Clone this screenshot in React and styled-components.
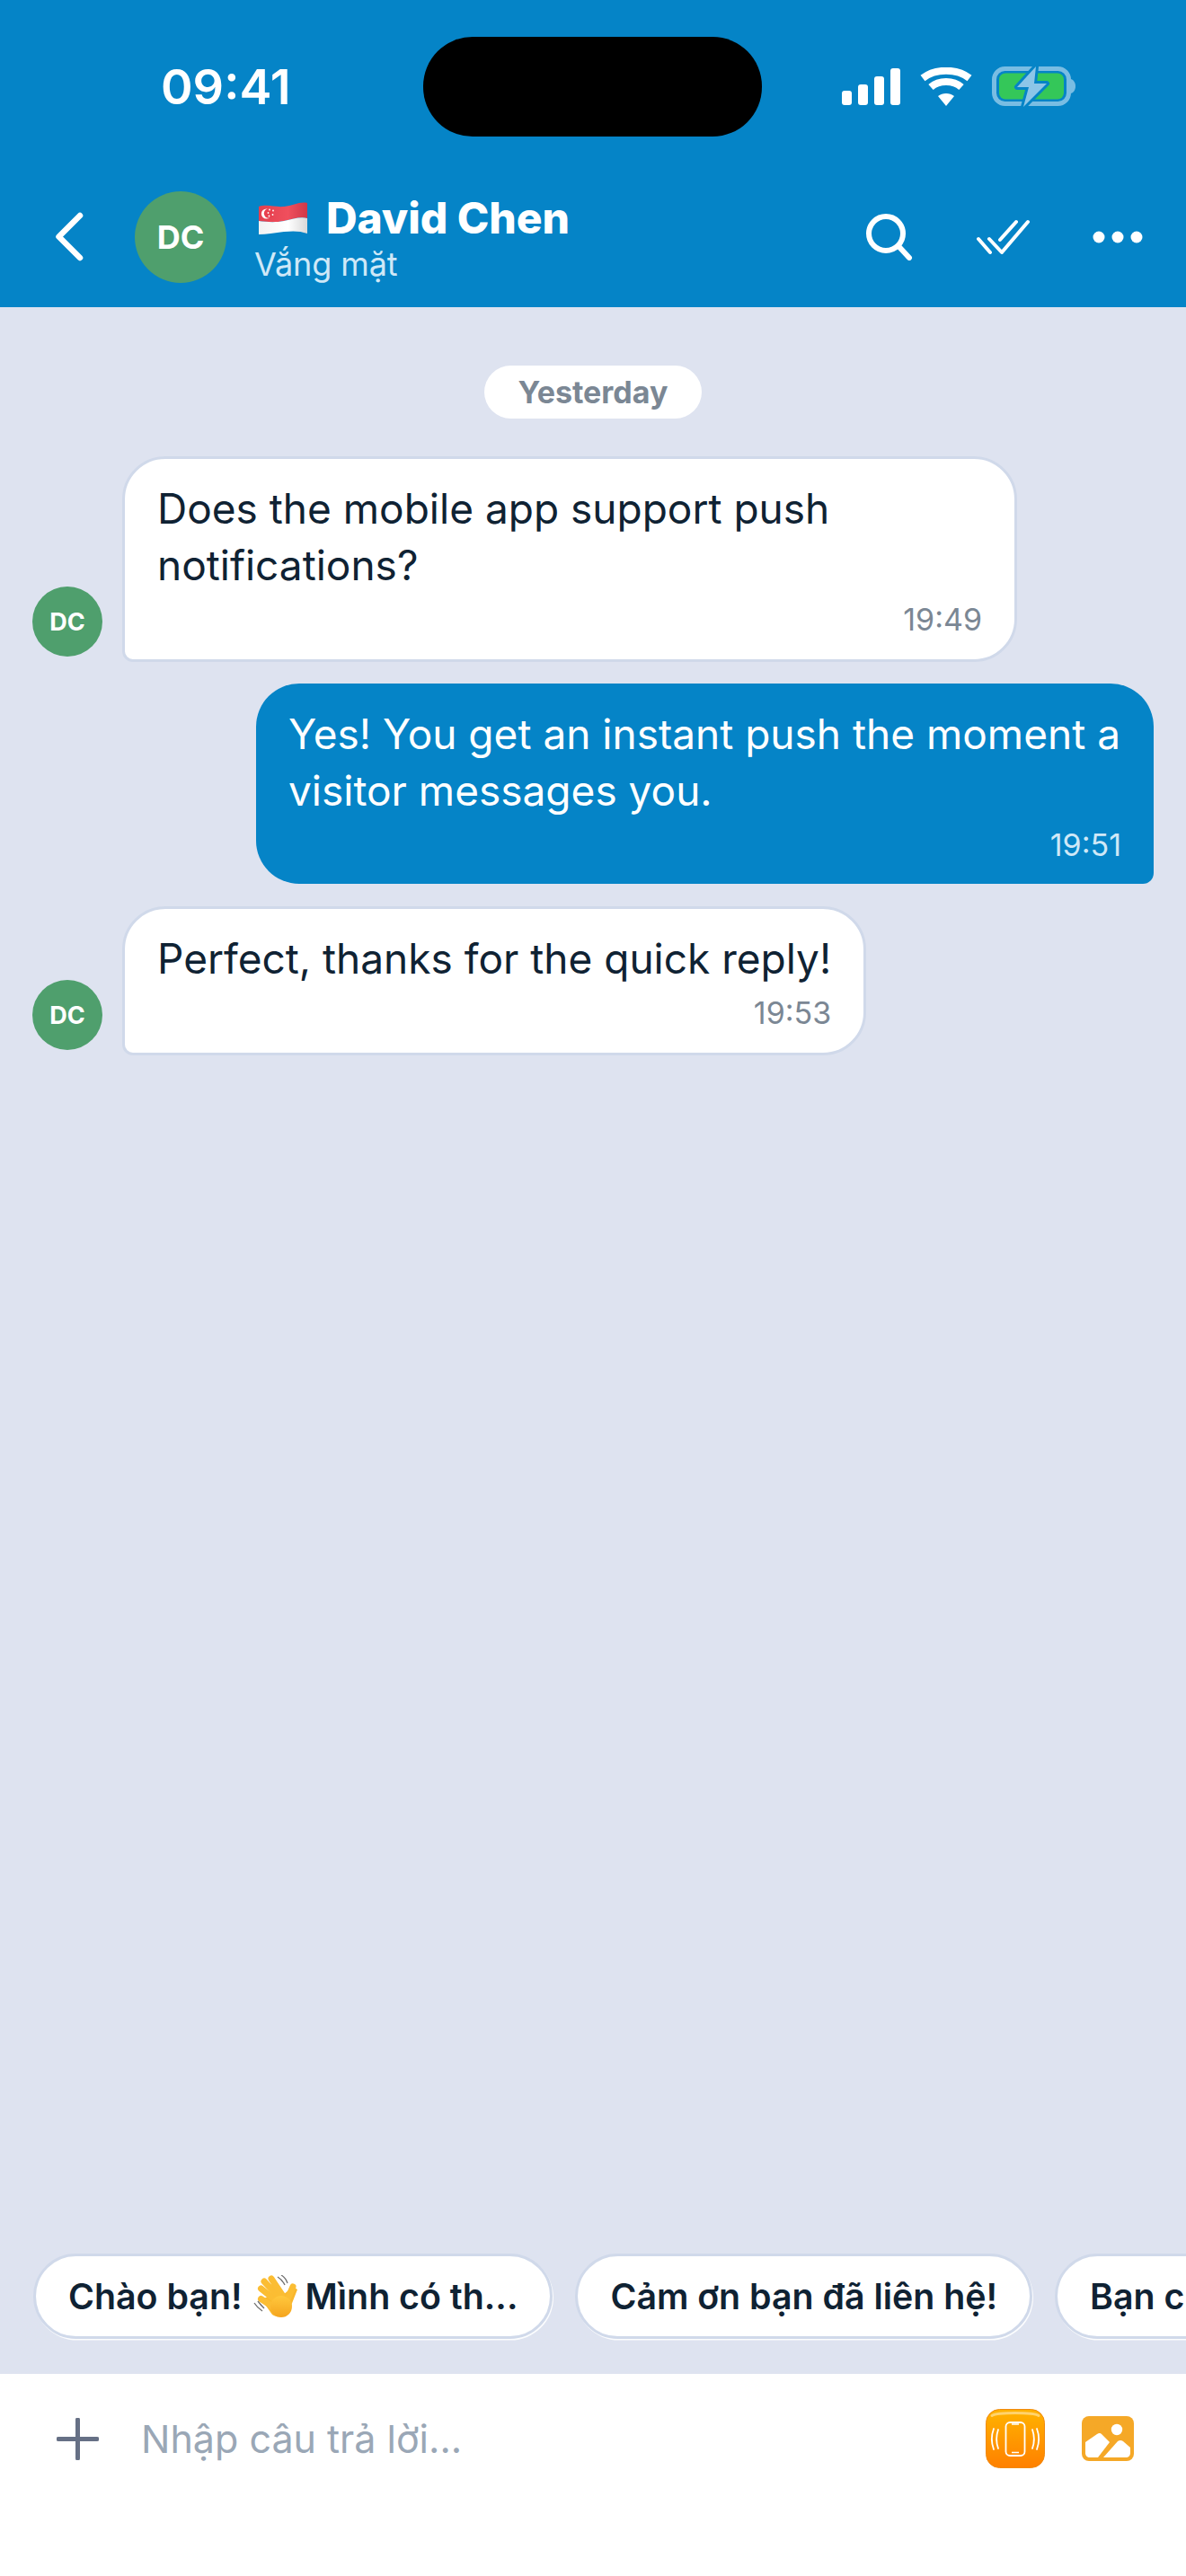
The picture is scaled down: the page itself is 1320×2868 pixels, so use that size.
import React from "react";
import styled, { createGlobalStyle } from "styled-components";

const Global = createGlobalStyle`
  html, body { margin: 0; padding: 0; background: #fff; }
  * { box-sizing: border-box; }
  body { font-family: Inter, "Noto Sans", sans-serif; -webkit-font-smoothing: antialiased; }
`;

const Screen = styled.div`
  width: 1320px; height: 2868px; display: flex; flex-direction: column;
  background: #dee3f0; overflow: hidden;
`;
const Header = styled.header`
  background: #0584c7; height: 342px; flex: none; color: #fff; padding-top: 41px;
`;
const StatusBar = styled.div`
  display: flex; align-items: center; height: 111px; padding-left: 179px;
`;
const Time = styled.div`
  font-size: 54px; font-weight: 600; width: 292px; line-height: 1; letter-spacing: 0;
`;
const Island = styled.div`
  width: 377px; height: 111px; border-radius: 55px; background: #000; flex: none;
`;
const StatusIcons = styled.div`
  display: flex; align-items: center; margin-left: 89px; gap: 22px;
`;
const Nav = styled.div`
  display: flex; align-items: center; margin-top: 61px; height: 102px; padding-left: 58px;
`;
const BackIcon = styled.svg`
  width: 38px; height: 60px; flex: none; margin-right: 54px;
`;
const Avatar = styled.div`
  flex: none; border-radius: 50%; background: #4f9f6d; color: #fff; font-weight: 700;
  display: flex; align-items: center; justify-content: center;
  width: ${p => p.$size}px; height: ${p => p.$size}px; font-size: ${p => p.$font}px;
`;
const NavText = styled.div`
  margin-left: 31px; width: 670px; flex: none; display: flex; flex-direction: column; padding-top: 3px;
`;
const NameRow = styled.div`
  display: flex; align-items: center; height: 54px; padding-left: 5px; margin-bottom: 2px;
`;
const Name = styled.span`
  font-size: 48px; font-weight: 800; margin-left: 21px; line-height: 54px; letter-spacing: -0.1px;
`;
const Presence = styled.div`
  font-size: 36px; line-height: 44px; color: #cfe8f7; font-weight: 400; letter-spacing: -0.1px;
`;
const NavActions = styled.div`
  display: flex; align-items: center;
`;
const NavIcon = styled.svg`
  flex: none; display: block; margin-left: ${p => p.$ml}px;
`;

const Messages = styled.main`
  flex: 1; min-height: 0; display: flex; flex-direction: column; padding-top: 65px;
`;
const DatePill = styled.div`
  align-self: center; height: 59px; padding: 0 38px; border-radius: 30px; background: #fff;
  color: #7b8794; font-size: 34px; font-weight: 700; display: flex; align-items: center;
  margin-bottom: 42px;
`;
const Row = styled.div`
  display: flex; align-items: flex-end; gap: 22px; padding: 0 36px;
  justify-content: ${p => (p.$mine ? "flex-end" : "flex-start")};
  margin-bottom: ${p => p.$mb}px;
`;
const Bubble = styled.div`
  max-width: ${p => p.$max}px; padding: ${p => (p.$mine ? "25px 36px 23px" : "24px 36px 24px")};
  background: ${p => (p.$mine ? "#0584c7" : "#fff")};
  color: ${p => (p.$mine ? "#fff" : "#0f2233")};
  border: ${p => (p.$mine ? "0" : "3px solid #d0d9ea")};
  border-radius: ${p => (p.$mine ? "48px 48px 12px 48px" : "48px 48px 48px 12px")};
  font-size: 46px; line-height: 63px; font-weight: 400;
`;
const BubbleTime = styled.div`
  text-align: right; font-size: 34px; line-height: 40px; margin-top: 9px;
  color: ${p => (p.$mine ? "#cfe8f7" : "#7b8794")};
`;
const SideAvatar = styled(Avatar)`
  margin-bottom: 6px;
`;

const Chips = styled.div`
  flex: none; display: flex; gap: 25px; padding: 0 0 39px 37px; overflow: hidden;
`;
const Chip = styled.div`
  flex: none; height: 95px; border-radius: 48px; background: #fff; border: 3px solid #d0d9ea;
  box-shadow: 1px 1.5px 0 rgba(255, 255, 255, 0.9); display: flex; align-items: center; padding: 0 36px;
  color: #0f2233; font-size: 39.3px; font-weight: 600; white-space: nowrap;
`;
const Wave = styled.svg`
  width: 50px; height: 48px; flex: none; margin: 0 8px 0 12px;
`;
const Composer = styled.footer`
  flex: none; height: 225px; background: #fff; display: flex; align-items: flex-start;
  padding: 39px 58px 0 63px;
`;
const PlusIcon = styled.svg`
  width: 47px; height: 47px; flex: none; margin-top: 10px;
`;
const Placeholder = styled.div`
  flex: 1; margin-left: 47px; font-size: 43px; color: #9aa7b6; line-height: 66px;
`;
const ToolIcon = styled.svg`
  flex: none; display: block; margin-left: ${p => p.$ml}px; margin-top: ${p => p.$mt}px;
`;

const Flag = () => (
  <svg width="54" height="38" viewBox="0 0 54 38" style={{ display: "block", flex: "none" }}>
    <defs>
      <linearGradient id="fr" x1="0" y1="0" x2="1" y2="0">
        <stop offset="0" stopColor="#e2404f" /><stop offset="0.6" stopColor="#f04f5d" /><stop offset="1" stopColor="#cf3848" />
      </linearGradient>
      <linearGradient id="fw" x1="0" y1="0" x2="1" y2="0">
        <stop offset="0" stopColor="#f3f2f2" /><stop offset="0.6" stopColor="#fff" /><stop offset="1" stopColor="#d9d8d8" />
      </linearGradient>
    </defs>
    <path d="M0 6C10 3 18 7 28 6 38 5 46 0 54 2V19C46 17 38 20 28 22 18 24 8 23 0 22Z" fill="url(#fr)" />
    <path d="M0 22C8 23 18 24 28 22 38 20 46 17 54 19V36C46 33 38 33 28 34 18 35 8 37 0 37Z" fill="url(#fw)" />
    <circle cx="8.5" cy="14" r="5.6" fill="#fff" />
    <circle cx="11" cy="13.5" r="5.2" fill="#e8404f" />
    <g fill="#fff"><circle cx="12" cy="9.5" r="0.9" /><circle cx="16" cy="10.5" r="0.9" /><circle cx="15.5" cy="15" r="0.9" /><circle cx="11.5" cy="16.5" r="0.9" /><circle cx="10.5" cy="13" r="0.9" /></g>
  </svg>
);

const Signal = () => (
  <svg width="65" height="41" viewBox="0 0 65 41" style={{ display: "block" }}>
    <rect x="0" y="25" width="11" height="16" rx="3" fill="#fff" />
    <rect x="18" y="18" width="11" height="23" rx="3" fill="#fff" />
    <rect x="36" y="9" width="11" height="32" rx="3" fill="#fff" />
    <rect x="54" y="0" width="11" height="41" rx="3" fill="#fff" />
  </svg>
);
const Wifi = () => (
  <svg width="58" height="43" viewBox="0 0 58 43" style={{ display: "block" }}>
    <path d="M29 43 20 32C25 28 33 28 38 32Z" fill="#fff" />
    <path d="M12 22C21 14 37 14 46 22" fill="none" stroke="#fff" strokeWidth="8" />
    <path d="M3 12C17 1 41 1 55 12" fill="none" stroke="#fff" strokeWidth="8" />
  </svg>
);
const Battery = () => (
  <svg width="93" height="45" viewBox="0 0 93 45" style={{ display: "block" }}>
    <rect x="2.5" y="2.5" width="83" height="39" rx="12" fill="none" stroke="#79bde3" strokeWidth="5" />
    <rect x="8" y="7.5" width="72" height="29" rx="7" fill="#34c759" />
    <path d="M88 14C91 15 93 18 93 22 93 26 91 29 88 30Z" fill="#79bde3" />
    <path d="M49 0 28 23H41L35 45 61 19H47Z" fill="#8cc6e8" stroke="#0584c7" strokeWidth="6" strokeLinejoin="round" paintOrder="stroke" />
  </svg>
);

const HapticIcon = () => (
  <ToolIcon $ml={0} $mt={0} width="66" height="66" viewBox="0 0 66 66">
    <defs>
      <linearGradient id="hg" x1="0" y1="0" x2="0" y2="1">
        <stop offset="0" stopColor="#ffb300" />
        <stop offset="1" stopColor="#ff8000" />
      </linearGradient>
    </defs>
    <rect x="0.5" y="0.5" width="65" height="65" rx="15" fill="url(#hg)" stroke="#f08a10" />
    <path d="M7 7.5C13 3.5 53 3.5 59 7.5" fill="none" stroke="#ffd36e" strokeWidth="3" strokeLinecap="round" />
    <rect x="22.5" y="15" width="21" height="37" rx="4.5" fill="none" stroke="#fff" strokeWidth="1.8" />
    <path d="M29 17H37M29 48.5H37" stroke="#fff" strokeWidth="1.5" />
    <path d="M14 23C11.5 30 11.5 37 14 44M9 22C6 30 6 37 9 45M52 23C54.5 30 54.5 37 52 44M57 22C60 30 60 37 57 45" fill="none" stroke="#fff" strokeWidth="1.8" strokeLinecap="round" />
  </ToolIcon>
);
const ImageIcon = () => (
  <ToolIcon $ml={41} $mt={8} width="58" height="50" viewBox="0 0 58 50">
    <rect width="58" height="50" rx="8" fill="#f5a827" />
    <circle cx="39" cy="15" r="6.2" fill="#fff" />
    <path d="M4 29 17 20C19.5 18.5 21 19 22.5 20.5L31 29 18 46H9C6 46 4 44 4 41Z" fill="#fff" />
    <path d="M24 46 40 28C42 26.5 44 26.5 46 28L54 35V41C54 44 52 46 49 46Z" fill="#fff" />
  </ToolIcon>
);

const WaveHand = () => (
  <Wave viewBox="10 8 50 48">
    <defs>
      <linearGradient id="wh" x1="0" y1="0" x2="0" y2="1">
        <stop offset="0" stopColor="#ffc83d" />
        <stop offset="1" stopColor="#f5a41e" />
      </linearGradient>
    </defs>
    <path d="M31 30 30 12 43 30 54 21 59 24 50 47C46 55 37 56 31 52L19 35Z" fill="#f9b72c" />
    <g stroke="#fbbd33" strokeLinecap="round" fill="none" strokeWidth="7">
      <path d="M18.5 34.5 33 44" />
      <path d="M18.5 23 36 37" />
      <path d="M22 15 38 32" />
      <path d="M30 12 42 30" />
      <path d="M54 21 47 37" />
    </g>
    <ellipse cx="41" cy="43" rx="12" ry="12" fill="url(#wh)" />
    <path d="M37 10Q42 13 45 19M41 8Q46 11 48 17M11 39Q14 44 20 48M15 37Q18 41 22 45" fill="none" stroke="#6f6f6f" strokeWidth="1.3" />
  </Wave>
);

export default function App() {
  return (
    <Screen>
      <Global />
      <Header>
        <StatusBar>
          <Time>09:41</Time>
          <Island />
          <StatusIcons>
            <Signal />
            <Wifi />
            <Battery />
          </StatusIcons>
        </StatusBar>
        <Nav>
          <BackIcon viewBox="0 0 38 60">
            <polyline points="31,6 7.5,29.5 31,53" fill="none" stroke="#fff" strokeWidth="6.5" strokeLinecap="round" strokeLinejoin="round" />
          </BackIcon>
          <Avatar $size={102} $font={36}>DC</Avatar>
          <NavText>
            <NameRow>
              <Flag />
              <Name>David Chen</Name>
            </NameRow>
            <Presence>Vắng mặt</Presence>
          </NavText>
          <NavActions>
            <NavIcon $ml={11} width="52" height="52" viewBox="0 0 52 52">
              <circle cx="22" cy="22" r="19" fill="none" stroke="#fff" strokeWidth="6" />
              <path d="M36 36 48 49" stroke="#fff" strokeWidth="6" strokeLinecap="round" />
            </NavIcon>
            <NavIcon $ml={71} width="60" height="40" viewBox="0 0 60 40">
              <g fill="none" stroke="#fff" strokeWidth="4" strokeLinecap="round" strokeLinejoin="round">
                <path d="M2 22 15 37M14 22 28 37 57 3M26 23 44 3" />
              </g>
            </NavIcon>
            <NavIcon $ml={69} width="56" height="14" viewBox="0 0 56 14">
              <circle cx="7" cy="7" r="6.5" fill="#fff" />
              <circle cx="28" cy="7" r="6.5" fill="#fff" />
              <circle cx="49" cy="7" r="6.5" fill="#fff" />
            </NavIcon>
          </NavActions>
        </Nav>
      </Header>

      <Messages>
        <DatePill>Yesterday</DatePill>
        <Row $mb={24}>
          <SideAvatar $size={78} $font={27}>DC</SideAvatar>
          <Bubble $max={996}>
            Does the mobile app support push notifications?
            <BubbleTime>19:49</BubbleTime>
          </Bubble>
        </Row>
        <Row $mine $mb={25}>
          <Bubble $mine $max={999}>
            Yes! You get an instant push the moment a visitor messages you.
            <BubbleTime $mine>19:51</BubbleTime>
          </Bubble>
        </Row>
        <Row $mb={0}>
          <SideAvatar $size={78} $font={27}>DC</SideAvatar>
          <Bubble $max={996}>
            Perfect, thanks for the quick reply!
            <BubbleTime>19:53</BubbleTime>
          </Bubble>
        </Row>
      </Messages>

      <Chips>
        <Chip>Chào bạn!<WaveHand />Mình có th...</Chip>
        <Chip>Cảm ơn bạn đã liên hệ!</Chip>
        <Chip>Bạn chờ mình một chút nhé!</Chip>
      </Chips>
      <Composer>
        <PlusIcon viewBox="0 0 47 47">
          <path d="M23.5 2V45M2 23.5H45" stroke="#667085" strokeWidth="5" strokeLinecap="round" />
        </PlusIcon>
        <Placeholder>Nhập câu trả lời...</Placeholder>
        <HapticIcon />
        <ImageIcon />
      </Composer>
    </Screen>
  );
}
